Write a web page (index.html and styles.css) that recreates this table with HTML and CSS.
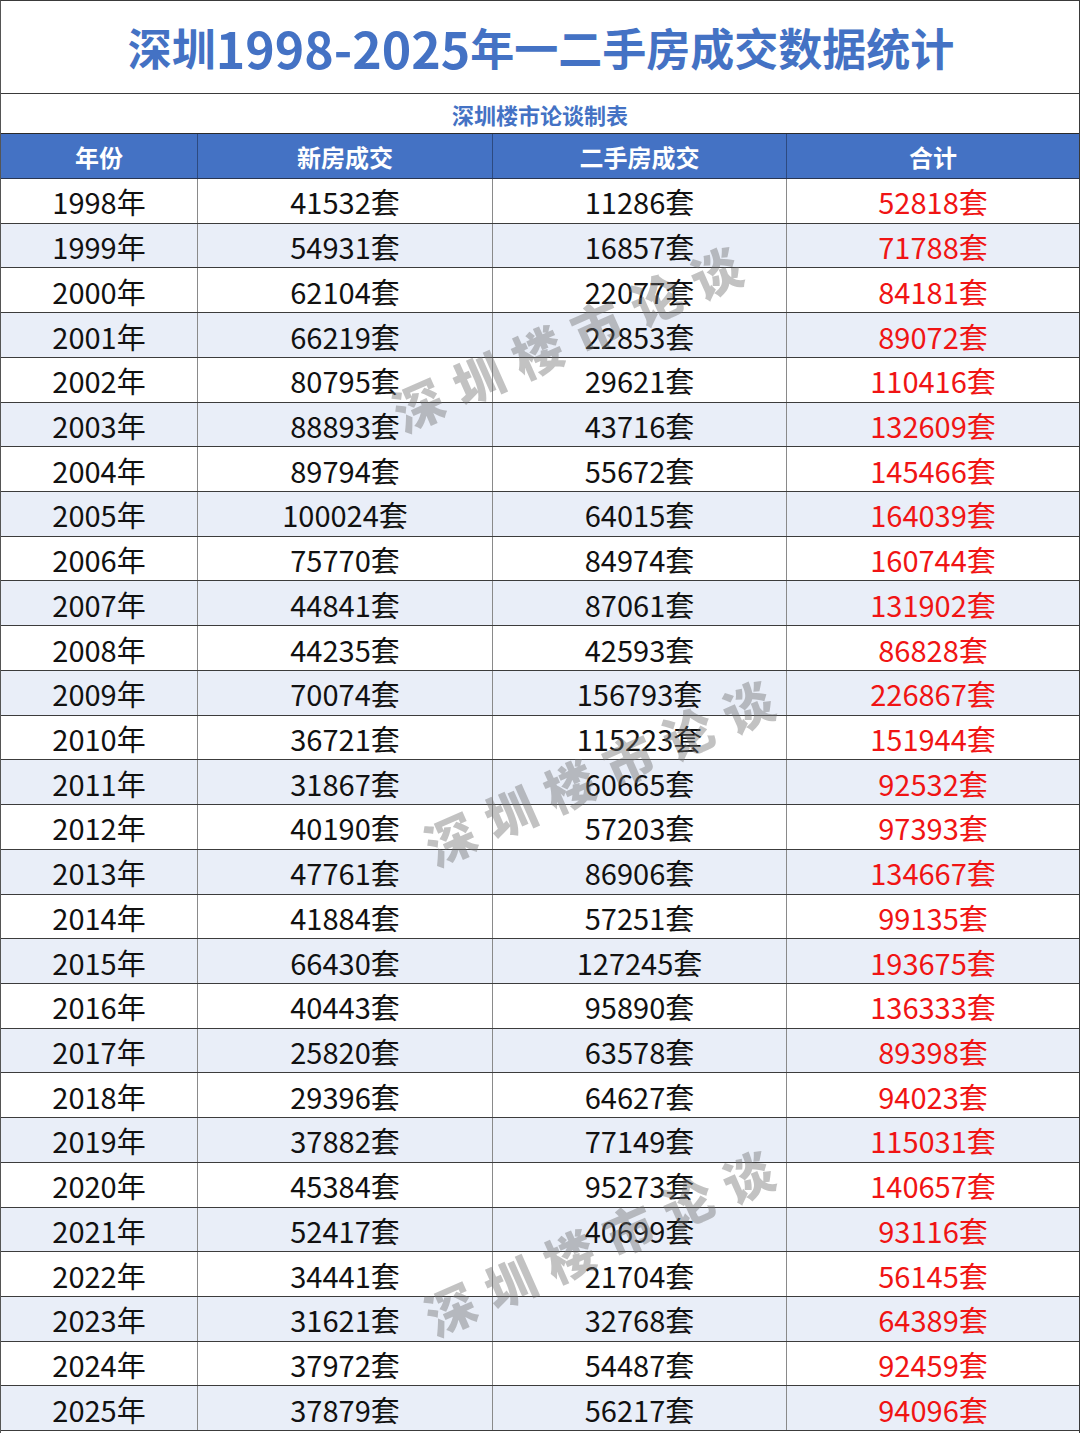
FILE: index.html
```html
<!DOCTYPE html>
<html lang="zh-CN">
<head>
<meta charset="utf-8">
<title>深圳1998-2025年一二手房成交数据统计</title>
<link rel="stylesheet" href="styles.css">
</head>
<body>
<div class="sheet">
  <div class="title">深圳<span class="num">1998-2025</span>年一二手房成交数据统计</div>
  <div class="subtitle">深圳楼市论谈制表</div>
  <div class="grid head">
    <div class="cell">年份</div>
    <div class="cell">新房成交</div>
    <div class="cell">二手房成交</div>
    <div class="cell">合计</div>
  </div>
  <div class="body" id="body">
    <div class="grid row"><div class="cell">1998年</div><div class="cell">41532套</div><div class="cell">11286套</div><div class="cell sum">52818套</div></div>
    <div class="grid row alt"><div class="cell">1999年</div><div class="cell">54931套</div><div class="cell">16857套</div><div class="cell sum">71788套</div></div>
    <div class="grid row"><div class="cell">2000年</div><div class="cell">62104套</div><div class="cell">22077套</div><div class="cell sum">84181套</div></div>
    <div class="grid row alt"><div class="cell">2001年</div><div class="cell">66219套</div><div class="cell">22853套</div><div class="cell sum">89072套</div></div>
    <div class="grid row"><div class="cell">2002年</div><div class="cell">80795套</div><div class="cell">29621套</div><div class="cell sum">110416套</div></div>
    <div class="grid row alt"><div class="cell">2003年</div><div class="cell">88893套</div><div class="cell">43716套</div><div class="cell sum">132609套</div></div>
    <div class="grid row"><div class="cell">2004年</div><div class="cell">89794套</div><div class="cell">55672套</div><div class="cell sum">145466套</div></div>
    <div class="grid row alt"><div class="cell">2005年</div><div class="cell">100024套</div><div class="cell">64015套</div><div class="cell sum">164039套</div></div>
    <div class="grid row"><div class="cell">2006年</div><div class="cell">75770套</div><div class="cell">84974套</div><div class="cell sum">160744套</div></div>
    <div class="grid row alt"><div class="cell">2007年</div><div class="cell">44841套</div><div class="cell">87061套</div><div class="cell sum">131902套</div></div>
    <div class="grid row"><div class="cell">2008年</div><div class="cell">44235套</div><div class="cell">42593套</div><div class="cell sum">86828套</div></div>
    <div class="grid row alt"><div class="cell">2009年</div><div class="cell">70074套</div><div class="cell">156793套</div><div class="cell sum">226867套</div></div>
    <div class="grid row"><div class="cell">2010年</div><div class="cell">36721套</div><div class="cell">115223套</div><div class="cell sum">151944套</div></div>
    <div class="grid row alt"><div class="cell">2011年</div><div class="cell">31867套</div><div class="cell">60665套</div><div class="cell sum">92532套</div></div>
    <div class="grid row"><div class="cell">2012年</div><div class="cell">40190套</div><div class="cell">57203套</div><div class="cell sum">97393套</div></div>
    <div class="grid row alt"><div class="cell">2013年</div><div class="cell">47761套</div><div class="cell">86906套</div><div class="cell sum">134667套</div></div>
    <div class="grid row"><div class="cell">2014年</div><div class="cell">41884套</div><div class="cell">57251套</div><div class="cell sum">99135套</div></div>
    <div class="grid row alt"><div class="cell">2015年</div><div class="cell">66430套</div><div class="cell">127245套</div><div class="cell sum">193675套</div></div>
    <div class="grid row"><div class="cell">2016年</div><div class="cell">40443套</div><div class="cell">95890套</div><div class="cell sum">136333套</div></div>
    <div class="grid row alt"><div class="cell">2017年</div><div class="cell">25820套</div><div class="cell">63578套</div><div class="cell sum">89398套</div></div>
    <div class="grid row"><div class="cell">2018年</div><div class="cell">29396套</div><div class="cell">64627套</div><div class="cell sum">94023套</div></div>
    <div class="grid row alt"><div class="cell">2019年</div><div class="cell">37882套</div><div class="cell">77149套</div><div class="cell sum">115031套</div></div>
    <div class="grid row"><div class="cell">2020年</div><div class="cell">45384套</div><div class="cell">95273套</div><div class="cell sum">140657套</div></div>
    <div class="grid row alt"><div class="cell">2021年</div><div class="cell">52417套</div><div class="cell">40699套</div><div class="cell sum">93116套</div></div>
    <div class="grid row"><div class="cell">2022年</div><div class="cell">34441套</div><div class="cell">21704套</div><div class="cell sum">56145套</div></div>
    <div class="grid row alt"><div class="cell">2023年</div><div class="cell">31621套</div><div class="cell">32768套</div><div class="cell sum">64389套</div></div>
    <div class="grid row"><div class="cell">2024年</div><div class="cell">37972套</div><div class="cell">54487套</div><div class="cell sum">92459套</div></div>
    <div class="grid row alt"><div class="cell">2025年</div><div class="cell">37879套</div><div class="cell">56217套</div><div class="cell sum">94096套</div></div>
  </div>
  <div class="wm wm1">深圳楼市论谈</div>
  <div class="wm wm2">深圳楼市论谈</div>
  <div class="wm wm3">深圳楼市论谈</div>
</div>
</body>
</html>
```

FILE: styles.css
```css
html, body {
  margin: 0;
  padding: 0;
  background: #ffffff;
}

body {
  font-family: "Noto Sans CJK SC", "Noto Sans", sans-serif;
}

.sheet {
  position: relative;
  width: 1080px;
  height: 1433px;
  box-sizing: border-box;
  border-top: 1px solid #3a3a3a;
  border-left: 1px solid #555555;
  border-right: 1px solid #3a3a3a;
  overflow: hidden;
}

.title {
  height: 92px;
  border-bottom: 1px solid #3a3a3a;
  display: flex;
  align-items: center;
  justify-content: center;
  color: #4472c4;
  font-size: 44px;
  font-weight: 700;
  line-height: 1;
  padding-left: 2px;
}

.title .num {
  font-size: 50px;
}

.subtitle {
  height: 40px;
  border-bottom: 1px solid #2a2a2a;
  display: flex;
  align-items: center;
  justify-content: center;
  color: #4472c4;
  font-size: 22px;
  font-weight: 700;
  padding-top: 1px;
  box-sizing: border-box;
}

.grid {
  display: grid;
  grid-template-columns: 196px 295px 294px 1fr;
}

.head {
  height: 45px;
  box-sizing: border-box;
  background: #4472c4;
  border-bottom: 1px solid #2a3550;
  color: #ffffff;
  font-size: 24px;
  font-weight: 700;
}

.head .cell + .cell {
  border-left: 1px solid #2d4a80;
}

.cell {
  display: flex;
  align-items: center;
  justify-content: center;
  white-space: nowrap;
}

.row {
  height: 44.72px;
  box-sizing: border-box;
  border-bottom: 1px solid #3c3c3c;
  font-size: 29px;
  color: #111111;
  background: #ffffff;
}

.row .cell {
  padding-top: 1px;
}

.row .cell + .cell {
  border-left: 1px solid #8a8a8a;
}

.row.alt {
  background: #e9eef8;
}

.row .sum {
  color: #f01414;
}

.wm {
  position: absolute;
  transform: translate(-50%, -50%) rotate(-24deg);
  font-size: 50px;
  font-weight: 900;
  letter-spacing: 15px;
  color: rgba(110, 110, 110, 0.42);
  white-space: nowrap;
  pointer-events: none;
  font-family: "Noto Sans CJK SC", sans-serif;
}

.wm1 { left: 572px; top: 333px; }
.wm2 { left: 604px; top: 767px; }
.wm3 { left: 604px; top: 1237px; }
```
